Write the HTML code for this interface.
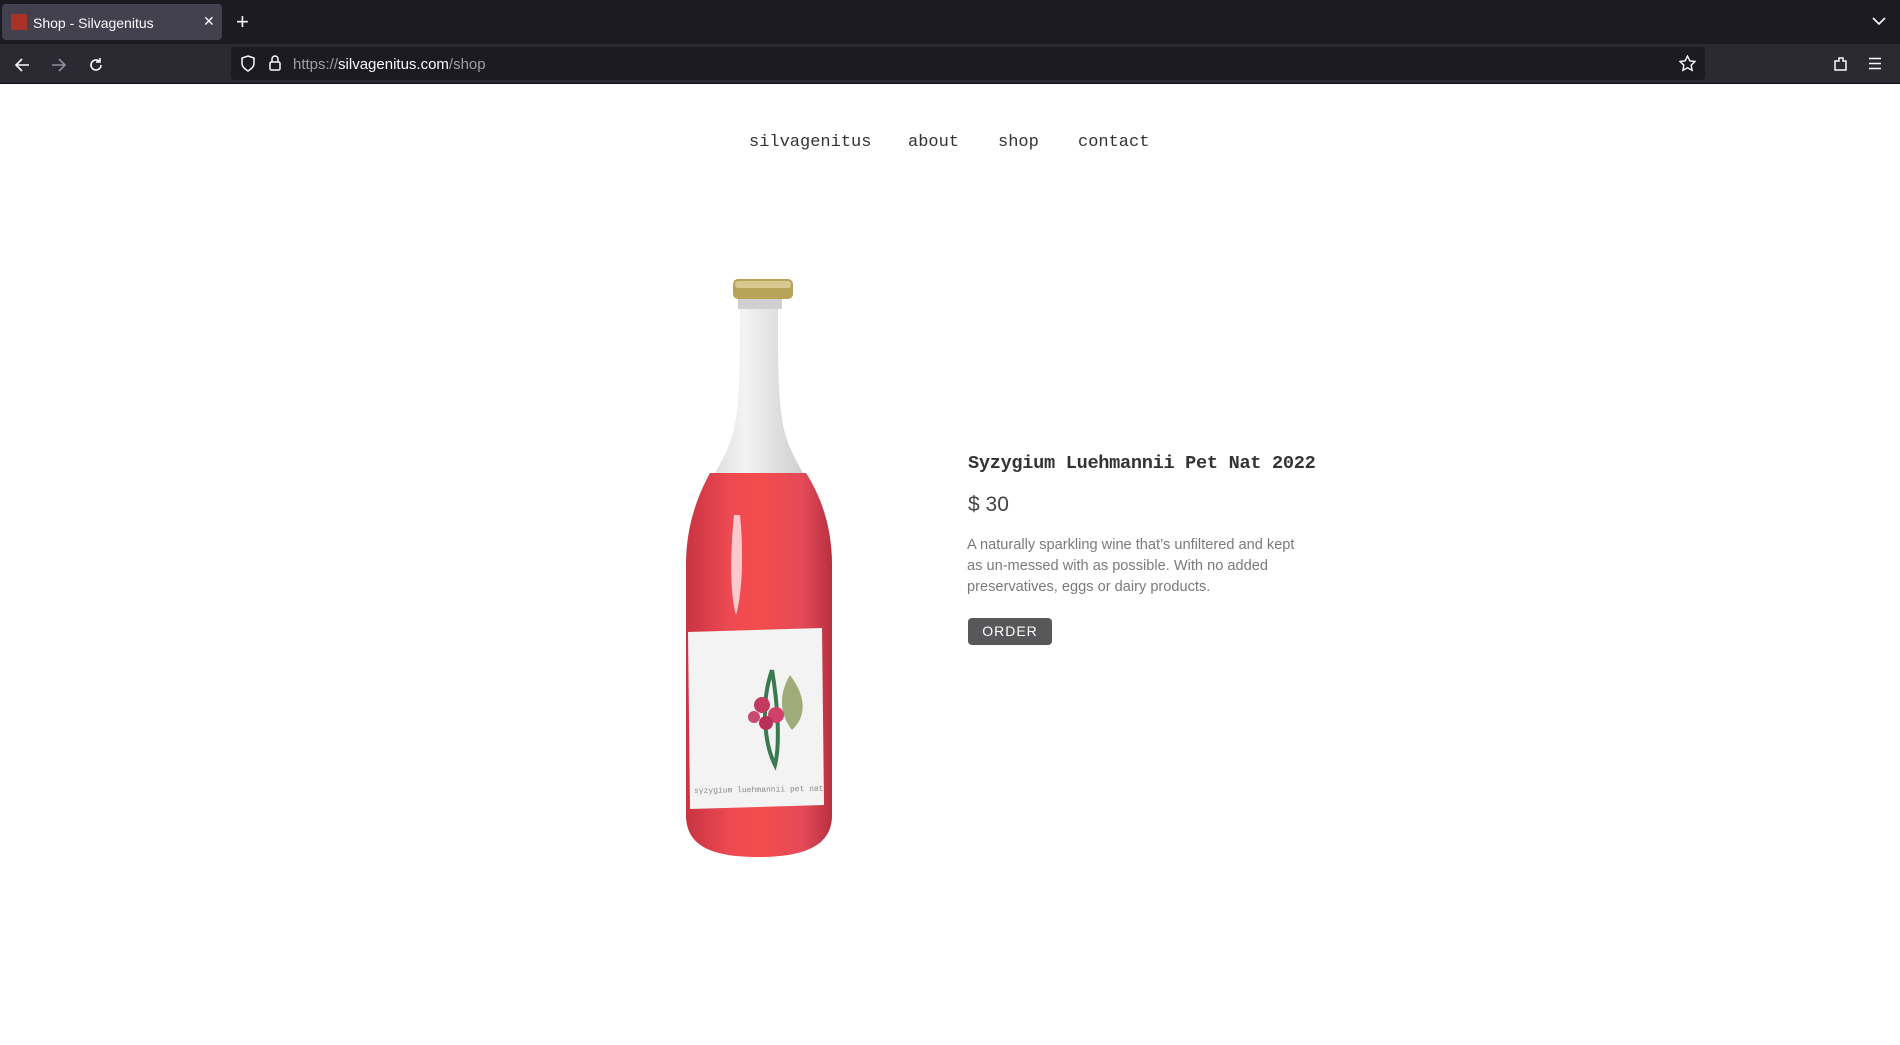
<!DOCTYPE html>
<html><head><meta charset="utf-8"><style>
*{margin:0;padding:0;box-sizing:border-box}
body{width:1900px;height:1045px;background:#fff;position:relative;overflow:hidden;font-family:"Liberation Sans",sans-serif}
.tabbar{position:absolute;left:0;top:0;width:1900px;height:44px;background:#1c1b22}
.tab{position:absolute;left:2px;top:4px;width:220px;height:36px;background:#42414d;border-radius:4px;color:#fbfbfe;font-size:14px}
.tab .fav{position:absolute;left:9px;top:10px;width:16px;height:16px;background:#a83226}
.tab .t{position:absolute;left:31px;top:11px}
.tab .x{position:absolute;left:201px;top:9px;font-size:14px}
.plus{position:absolute;left:236px;top:11px;color:#fbfbfe;font-size:22px;line-height:22px}
.toolbar{position:absolute;left:0;top:44px;width:1900px;height:40px;background:#2b2a33;border-bottom:1px solid #0c0c0d}
.url{position:absolute;left:231px;top:3px;width:1474px;height:33px;background:#1c1b22;border-radius:4px}
.url .u{position:absolute;left:62px;top:9px;font-size:15px;color:#9f9ea5}
.url .u b{font-weight:normal;color:#fbfbfe}
.nav{position:absolute;top:133px;font-family:"Liberation Mono",monospace;font-size:17px;color:#333}
.title{position:absolute;left:968px;top:453px;font-family:"Liberation Mono",monospace;font-size:18.6px;color:#333;letter-spacing:-0.3px;font-weight:bold}
.price{position:absolute;left:968px;top:493px;font-size:21px;color:#444}
.desc{position:absolute;left:967px;top:535px;width:342px;font-size:14.6px;line-height:21px;color:#7a7a7a}
.btn{position:absolute;left:968px;top:618px;width:84px;height:27px;background:#58585a;border-radius:4px;color:#fff;font-size:14px;letter-spacing:1px;text-align:center;line-height:27px}
</style></head><body>
<div class="tabbar">
 <div class="tab"><div class="fav"></div><div class="t">Shop - Silvagenitus</div><div class="x">✕</div></div>
 <div class="plus">+</div>
 <svg style="position:absolute;left:1872px;top:16px" width="14" height="10"><path d="M1 2l6 6 6-6" stroke="#fbfbfe" stroke-width="1.6" fill="none"/></svg>
</div>
<div class="toolbar">
 <svg style="position:absolute;left:14px;top:13px" width="16" height="16"><path d="M15 8H2M8 2L2 8l6 6" stroke="#fbfbfe" stroke-width="1.6" fill="none"/></svg>
 <svg style="position:absolute;left:51px;top:13px" width="16" height="16"><path d="M1 8h13M8 2l6 6-6 6" stroke="#8f8f9d" stroke-width="1.6" fill="none"/></svg>
 <svg style="position:absolute;left:88px;top:13px" width="16" height="16"><path d="M13 8a5 5 0 1 1-2-4M12 1v4H8" stroke="#fbfbfe" stroke-width="1.6" fill="none"/></svg>
 <div class="url">
  <svg style="position:absolute;left:9px;top:8px" width="16" height="17"><path d="M8 1l6 2v5c0 4-3 6-6 8-3-2-6-4-6-8V3z" stroke="#fbfbfe" stroke-width="1.5" fill="none"/></svg>
  <svg style="position:absolute;left:37px;top:7px" width="14" height="18"><rect x="2" y="8" width="10" height="8" rx="1.5" stroke="#fbfbfe" stroke-width="1.5" fill="none"/><path d="M4 8V5a3 3 0 0 1 6 0v3" stroke="#fbfbfe" stroke-width="1.5" fill="none"/></svg>
  <div class="u">https://<b>silvagenitus.com</b>/shop</div>
  <svg style="position:absolute;left:1448px;top:8px" width="17" height="17"><path d="M8.5 1l2.3 4.8 5.2.7-3.8 3.6.9 5.2-4.6-2.5-4.6 2.5.9-5.2L1 6.5l5.2-.7z" stroke="#fbfbfe" stroke-width="1.4" fill="none"/></svg>
 </div>
 <svg style="position:absolute;left:1832px;top:11px" width="17" height="17"><path d="M3 6h4V3h4v3h3v9H3z" stroke="#fbfbfe" stroke-width="1.5" fill="none"/></svg>
 <svg style="position:absolute;left:1868px;top:13px" width="14" height="13"><path d="M1 1.5h12M1 6.5h12M1 11.5h12" stroke="#fbfbfe" stroke-width="1.5"/></svg>
</div>

<div class="nav" style="left:749px">silvagenitus</div>
<div class="nav" style="left:908px">about</div>
<div class="nav" style="left:998px">shop</div>
<div class="nav" style="left:1078px">contact</div>

<svg style="position:absolute;left:680px;top:275px" width="160" height="590" viewBox="0 0 160 590">
 <defs>
  <linearGradient id="g" x1="0" x2="1"><stop offset="0" stop-color="#c83442"/><stop offset="0.3" stop-color="#ee4a52"/><stop offset="0.5" stop-color="#f44c4c"/><stop offset="0.8" stop-color="#e44a58"/><stop offset="1" stop-color="#b73040"/></linearGradient>
  <linearGradient id="n" x1="0" x2="1"><stop offset="0" stop-color="#c9c9cb"/><stop offset="0.4" stop-color="#f3f3f3"/><stop offset="1" stop-color="#bdbdc0"/></linearGradient>
 </defs>
 <path d="M60 22 L60 40 C60 90 60 120 55 150 C45 200 6 220 6 290 L6 540 C6 570 30 582 78 582 C126 582 152 570 152 540 L152 290 C152 220 113 200 103 150 C98 120 98 90 98 40 L98 22 Z" fill="url(#n)"/>
 <path d="M30 198 L126 198 C140 220 152 250 152 290 L152 540 C152 570 126 582 78 582 C30 582 6 570 6 540 L6 290 C6 250 18 220 30 198 Z" fill="url(#g)"/>
 <path d="M54 240 C50 280 50 320 56 340 C62 320 64 280 60 240 Z" fill="#fff" opacity="0.7"/>
 <rect x="53" y="4" width="60" height="20" rx="5" fill="#b9a35a"/>
 <rect x="55" y="6" width="56" height="7" rx="3" fill="#d8c890"/>
 <rect x="58" y="24" width="44" height="10" fill="#d0d0d2"/>
 <path d="M8 357 L142 353 L144 530 L10 534 Z" fill="#f3f3f3"/>
 <path d="M110 400 C125 420 128 440 112 455 C100 440 98 420 110 400 Z" fill="#8a9a5a" opacity="0.8"/>
 <path d="M92 395 C80 430 85 470 95 490 C100 470 98 430 92 395" stroke="#3a7a50" stroke-width="4" fill="none"/>
 <circle cx="82" cy="430" r="8" fill="#c23a60"/><circle cx="96" cy="440" r="8" fill="#d04068"/><circle cx="86" cy="448" r="7" fill="#b83058"/><circle cx="74" cy="442" r="6" fill="#c84a70"/>
 <text x="14" y="518" font-family="Liberation Mono,monospace" font-size="8" fill="#888" transform="rotate(-1 14 518)">syzygium luehmannii pet nat</text>
</svg>

<div class="title">Syzygium Luehmannii Pet Nat 2022</div>
<div class="price">$ 30</div>
<div class="desc">A naturally sparkling wine that’s unfiltered and kept as un-messed with as possible. With no added preservatives, eggs or dairy products.</div>
<div class="btn">ORDER</div>
</body></html>
